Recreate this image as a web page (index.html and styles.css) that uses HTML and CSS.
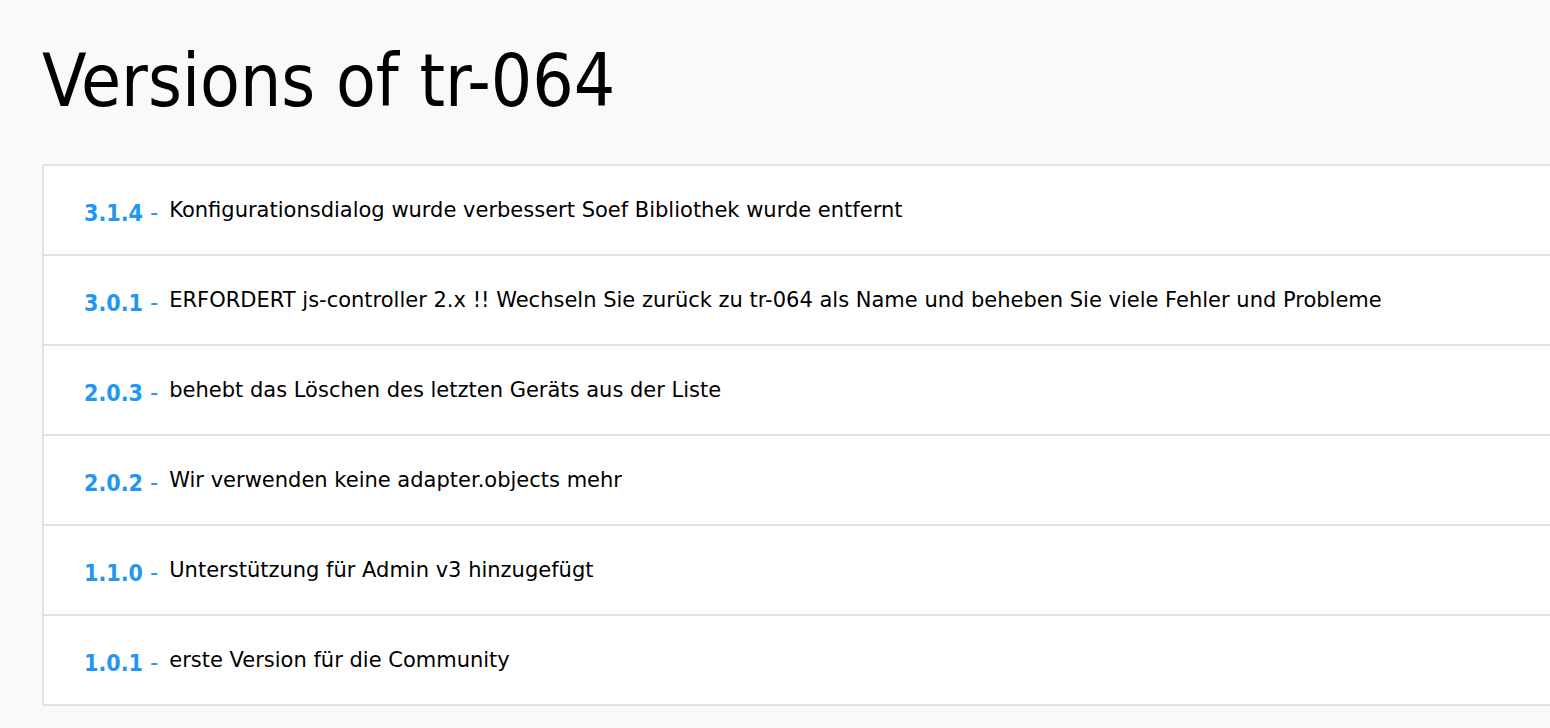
FILE: index.html
```html
<!DOCTYPE html>
<html>
<head>
<meta charset="utf-8">
<link rel="stylesheet" href="styles.css">
</head>
<body>
<div class="page">
  <h1 class="title">Versions of tr-064</h1>
  <ul class="versions">
    <li class="row"><span class="ver">3.1.4</span><span class="dash">-</span><span class="desc">Konfigurationsdialog wurde verbessert Soef Bibliothek wurde entfernt</span></li>
    <li class="row"><span class="ver">3.0.1</span><span class="dash">-</span><span class="desc">ERFORDERT js-controller 2.x !! Wechseln Sie zurück zu tr-064 als Name und beheben Sie viele Fehler und Probleme</span></li>
    <li class="row"><span class="ver">2.0.3</span><span class="dash">-</span><span class="desc">behebt das Löschen des letzten Geräts aus der Liste</span></li>
    <li class="row"><span class="ver">2.0.2</span><span class="dash">-</span><span class="desc">Wir verwenden keine adapter.objects mehr</span></li>
    <li class="row"><span class="ver">1.1.0</span><span class="dash">-</span><span class="desc">Unterstützung für Admin v3 hinzugefügt</span></li>
    <li class="row"><span class="ver">1.0.1</span><span class="dash">-</span><span class="desc">erste Version für die Community</span></li>
  </ul>
</div>
</body>
</html>
```
FILE: styles.css
```css
html, body {
  margin: 0;
  padding: 0;
  background: #f9f9f9;
  font-family: "DejaVu Sans", sans-serif;
  color: #000;
  overflow: hidden;
}
.page {
  padding: 36px 0 0 42px;
}
.title {
  margin: 0;
  font-family: "DejaVu Sans Condensed", "DejaVu Sans", sans-serif;
  font-weight: normal;
  font-size: 72.5px;
  line-height: 90px;
  height: 128px;
}
.versions {
  list-style: none;
  margin: 0;
  padding: 0;
  width: 1600px;
  background: #fff;
  border: 2px solid #e2e2e2;
  border-radius: 3px 0 0 3px;
}
.row {
  height: 88px;
  display: flex;
  align-items: center;
  padding-left: 40px;
  border-top: 2px solid #e2e2e2;
  font-size: 21px;
}
.row:first-child {
  border-top: none;
}
.ver {
  color: #2196f3;
  font-family: "DejaVu Sans Condensed", "DejaVu Sans", sans-serif;
  font-weight: bold;
  font-size: 23px;
  position: relative;
  top: 3px;
}
.dash {
  color: #2196f3;
  font-size: 23px;
  margin: 0 11px 0 7px;
  position: relative;
  top: 2px;
}
.desc {
  white-space: nowrap;
}
```
